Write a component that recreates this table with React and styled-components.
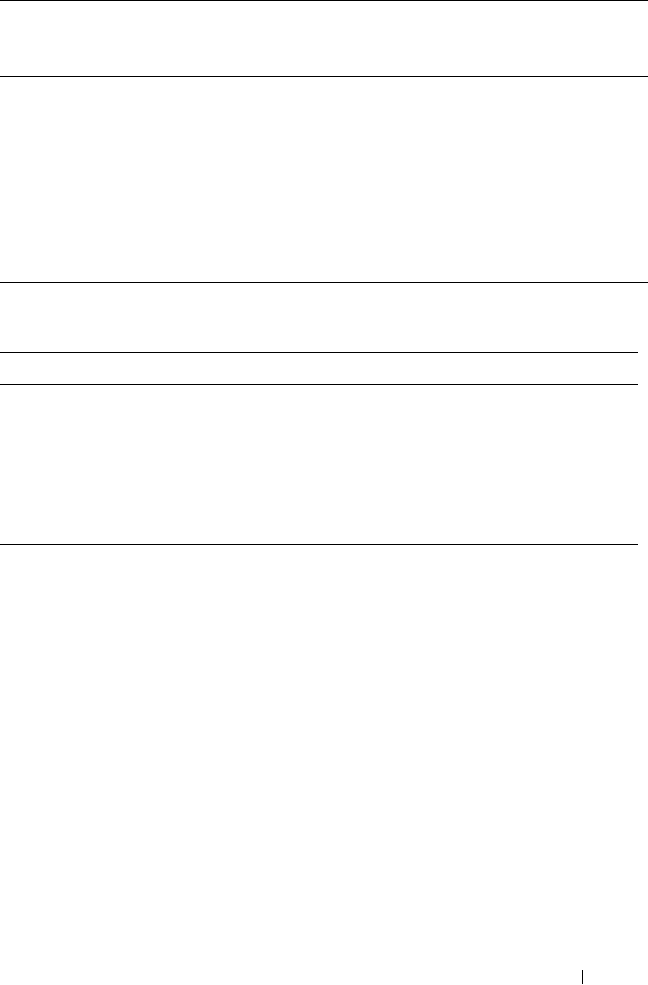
import React from 'react';
import styled, { createGlobalStyle } from 'styled-components';

const GlobalStyle = createGlobalStyle`
  html, body {
    margin: 0;
    padding: 0;
    background: #fff;
  }
  body {
    font-family: "Liberation Serif", serif;
    color: #000;
  }
  *, *::before, *::after {
    box-sizing: border-box;
  }
`;

const Page = styled.div`
  width: 648px;
  min-height: 985px;
  display: flex;
  flex-direction: column;
`;

const Table = styled.div`
  width: ${p => p.width}px;
  display: flex;
  flex-direction: column;
  border-bottom: 1px solid #000;
  margin-top: ${p => p.offset || 0}px;
`;

const Row = styled.div`
  height: ${p => p.height}px;
  border-top: 1px solid #000;
  display: grid;
  grid-template-columns: 1fr 1fr;
`;

const Cell = styled.div`
  padding: 6px 8px;
  font-size: 13px;
`;

const Footer = styled.footer`
  margin-top: auto;
  display: flex;
  justify-content: flex-end;
  padding: 0 65px 1px 0;
`;

const PageMark = styled.span`
  width: 1px;
  height: 14px;
  background: #000;
`;

function App() {
  return (
    <>
      <GlobalStyle />
      <Page>
        <Table width={648}>
          <Row height={76}><Cell /><Cell /></Row>
          <Row height={206}><Cell /><Cell /></Row>
        </Table>

        <Table width={638} offset={69}>
          <Row height={32}><Cell /><Cell /></Row>
          <Row height={160}><Cell /><Cell /></Row>
        </Table>

        <Footer>
          <PageMark />
        </Footer>
      </Page>
    </>
  );
}

export default App;
